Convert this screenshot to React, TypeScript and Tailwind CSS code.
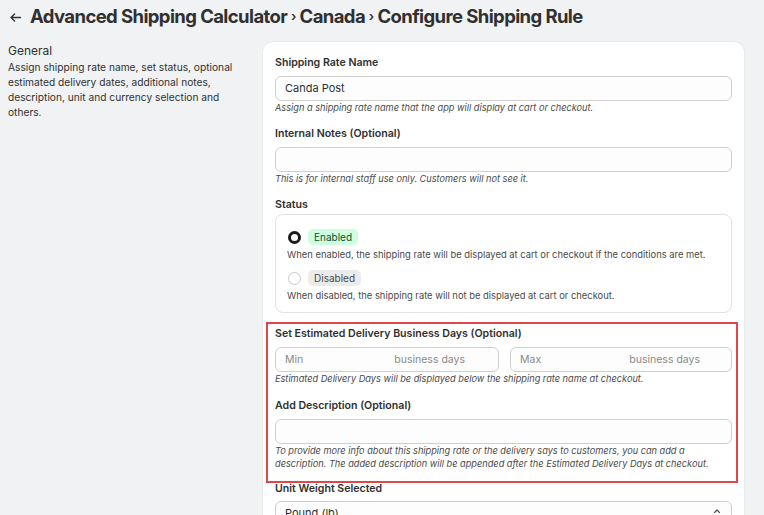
import React from "react";

const Label = ({ children }: { children: React.ReactNode }) => (
  <div className="text-[10.6px] leading-[15px] font-semibold text-[#303030]">{children}</div>
);

const Help = ({ children }: { children: React.ReactNode }) => (
  <div className="text-[9.2px] leading-[13px] italic text-[#4a4a4a]">{children}</div>
);

const Input = ({ value }: { value?: string }) => (
  <div className="mt-[6px] h-[25px] rounded-[6px] border border-[#cfcfcf] bg-[#fdfdfd] px-[9px] flex items-center text-[11px] text-[#303030]">
    {value}
  </div>
);

const Badge = ({ children, tone }: { children: React.ReactNode; tone: "success" | "neutral" }) => (
  <span
    className={
      tone === "success"
        ? "inline-flex h-[16px] items-center rounded-[5px] bg-[#cdfee1] px-[6px] text-[10px] text-[#0c5132]"
        : "inline-flex h-[16px] items-center rounded-[5px] bg-[#ebebeb] px-[6px] text-[10px] text-[#4a4a4a]"
    }
  >
    {children}
  </span>
);

export default function App() {
  return (
    <div
      className="h-screen w-full overflow-hidden bg-[#f1f2f4] text-[#303030]"
      style={{ fontFamily: "Inter, 'Noto Sans', sans-serif" }}
    >
      <div className="flex items-center h-[33px] pl-[10px] pt-[1px]">
        <svg width="11" height="9" viewBox="0 0 11 9" className="mr-[9px]">
          <path d="M10.5 4.5H1.2M4.6 1L1 4.5 4.6 8" fill="none" stroke="#303030" strokeWidth="1.3" strokeLinecap="round" strokeLinejoin="round" />
        </svg>
        <h1 className="text-[18.5px] font-bold tracking-[-0.6px] text-[#303030]">
          Advanced Shipping Calculator <span className="text-[13px] font-semibold relative -top-[2px]">›</span> Canada{" "}
          <span className="text-[13px] font-semibold relative -top-[2px]">›</span> Configure Shipping Rule
        </h1>
      </div>

      <div className="flex mt-[9px]">
        <div className="w-[232px] ml-[8px] mr-[23px] pt-[1px]">
          <div className="text-[12px] leading-[15px] text-[#303030]">General</div>
          <div className="mt-[2px] text-[10.2px] leading-[15px] text-[#303030]">
            Assign shipping rate name, set status, optional estimated delivery dates, additional notes, description, unit and
            currency selection and others.
          </div>
        </div>

        <div className="w-[481px] rounded-t-[10px] bg-white px-[12px] pt-[13px] pb-[20px] shadow-[0_0_0_1px_rgba(0,0,0,0.03)]">
          <Label>Shipping Rate Name</Label>
          <Input value="Canda Post" />
          <Help>Assign a shipping rate name that the app will display at cart or checkout.</Help>

          <div className="mt-[12px]">
            <Label>Internal Notes (Optional)</Label>
            <Input />
            <Help>This is for internal staff use only. Customers will not see it.</Help>
          </div>

          <div className="mt-[12px]">
            <Label>Status</Label>
            <div className="mt-[2px] h-[99px] rounded-[8px] border border-[#e3e3e3] px-[11px] pt-[14px]">
              <div className="flex items-center gap-[7px] pl-[1px]">
                <span className="h-[13px] w-[13px] rounded-full border-[3.5px] border-[#1a1a1a] bg-white" />
                <Badge tone="success">Enabled</Badge>
              </div>
              <div className="mt-[2px] text-[9.4px] leading-[15px] text-[#4a4a4a] whitespace-nowrap">
                When enabled, the shipping rate will be displayed at cart or checkout if the conditions are met.
              </div>
              <div className="mt-[8px] flex items-center gap-[7px] pl-[1px]">
                <span className="h-[13px] w-[13px] rounded-full border border-[#c9c9c9] bg-white" />
                <Badge tone="neutral">Disabled</Badge>
              </div>
              <div className="mt-[2px] text-[9.4px] leading-[15px] text-[#4a4a4a] whitespace-nowrap">
                When disabled, the shipping rate will not be displayed at cart or checkout.
              </div>
            </div>
          </div>

          <div className="relative mt-[13px]">
            <div className="pointer-events-none absolute -left-[9px] -right-[6px] -top-[4px] -bottom-[13px] border-2 border-[#e0474c]" />
            <Label>Set Estimated Delivery Business Days (Optional)</Label>
            <div className="flex gap-[11px]">
              <div className="flex-1 mt-[6px] h-[25px] rounded-[6px] border border-[#cfcfcf] bg-[#fdfdfd] pl-[9px] pr-[33px] flex items-center justify-between text-[10.5px] text-[#8a8a8a]">
                <span>Min</span>
                <span>business days</span>
              </div>
              <div className="flex-1 mt-[6px] h-[25px] rounded-[6px] border border-[#cfcfcf] bg-[#fdfdfd] pl-[9px] pr-[31px] flex items-center justify-between text-[10.5px] text-[#8a8a8a]">
                <span>Max</span>
                <span>business days</span>
              </div>
            </div>
            <Help>Estimated Delivery Days will be displayed below the shipping rate name at checkout.</Help>

            <div className="mt-[13px]">
              <Label>Add Description (Optional)</Label>
              <Input />
              <Help>
                To provide more info about this shipping rate or the delivery says to customers, you can add a
                <br />
                description. The added description will be appended after the Estimated Delivery Days at checkout.
              </Help>
            </div>
          </div>

          <div className="mt-[11px]">
            <Label>Unit Weight Selected</Label>
            <div className="mt-[5px] h-[25px] rounded-[6px] border border-[#cfcfcf] bg-[#fdfdfd] pl-[9px] pr-[10px] flex items-center justify-between text-[11px] text-[#303030]">
              <span>Pound (lb)</span>
              <svg width="8" height="12" viewBox="0 0 8 12">
                <path d="M1.5 4.5L4 2l2.5 2.5M1.5 7.5L4 10l2.5-2.5" fill="none" stroke="#4a4a4a" strokeWidth="1.1" strokeLinecap="round" strokeLinejoin="round" />
              </svg>
            </div>
          </div>
        </div>
      </div>
    </div>
  );
}
